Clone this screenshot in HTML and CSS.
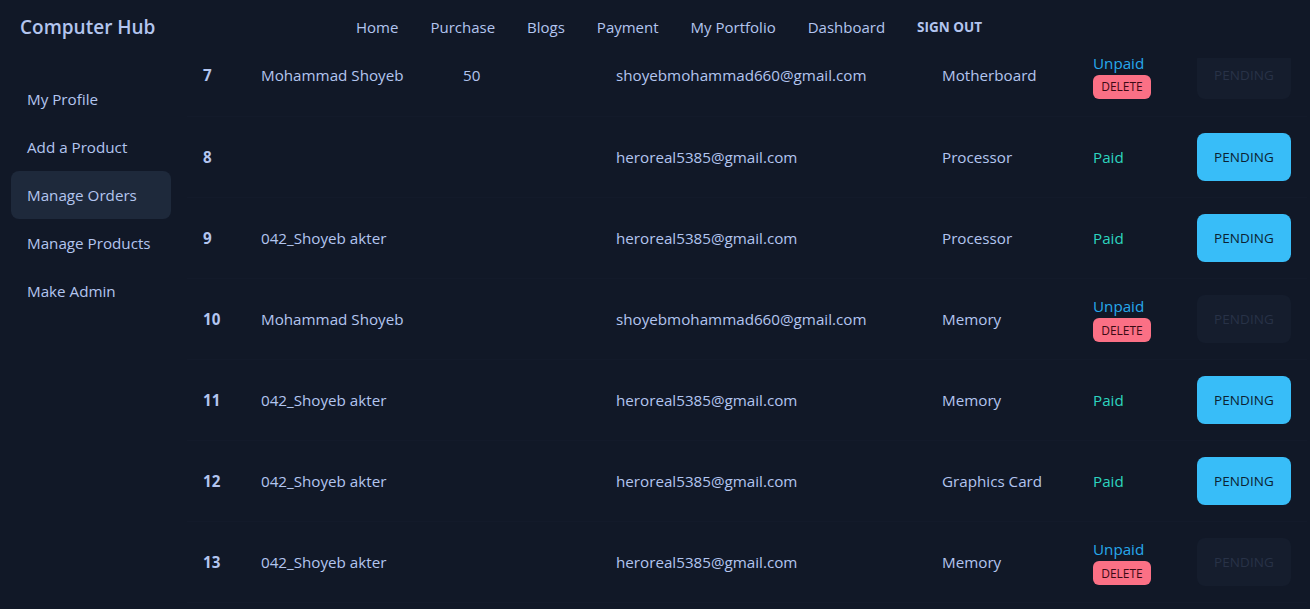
FILE: index.html
```html
<!DOCTYPE html>
<html lang="en">
<head>
<meta charset="utf-8">
<title>Computer Hub</title>
<link rel="stylesheet" href="styles.css">
</head>
<body>
<nav class="navbar">
  <a class="brand">Computer Hub</a>
  <ul class="menu-h">
    <li>Home</li>
    <li>Purchase</li>
    <li>Blogs</li>
    <li>Payment</li>
    <li>My Portfolio</li>
    <li>Dashboard</li>
    <li class="signout">SIGN OUT</li>
  </ul>
</nav>
<div class="layout">
  <aside class="sidebar">
    <ul class="menu-v">
      <li>My Profile</li>
      <li>Add a Product</li>
      <li class="active">Manage Orders</li>
      <li>Manage Products</li>
      <li>Make Admin</li>
    </ul>
  </aside>
  <main class="content">
    <table class="orders">
      <colgroup>
        <col class="c1"><col class="c2"><col class="c3"><col class="c4"><col class="c5"><col class="c6"><col class="c7">
      </colgroup>
      <tbody>
        <tr>
          <th>7</th><td>Mohammad Shoyeb</td><td>50</td><td>shoyebmohammad660@gmail.com</td><td>Motherboard</td>
          <td><div class="unpaid">Unpaid</div><button class="badge-del">DELETE</button></td>
          <td><button class="btn disabled">PENDING</button></td>
        </tr>
        <tr>
          <th>8</th><td></td><td></td><td>heroreal5385@gmail.com</td><td>Processor</td>
          <td><span class="paid">Paid</span></td>
          <td><button class="btn">PENDING</button></td>
        </tr>
        <tr>
          <th>9</th><td>042_Shoyeb akter</td><td></td><td>heroreal5385@gmail.com</td><td>Processor</td>
          <td><span class="paid">Paid</span></td>
          <td><button class="btn">PENDING</button></td>
        </tr>
        <tr>
          <th>10</th><td>Mohammad Shoyeb</td><td></td><td>shoyebmohammad660@gmail.com</td><td>Memory</td>
          <td><div class="unpaid">Unpaid</div><button class="badge-del">DELETE</button></td>
          <td><button class="btn disabled">PENDING</button></td>
        </tr>
        <tr>
          <th>11</th><td>042_Shoyeb akter</td><td></td><td>heroreal5385@gmail.com</td><td>Memory</td>
          <td><span class="paid">Paid</span></td>
          <td><button class="btn">PENDING</button></td>
        </tr>
        <tr>
          <th>12</th><td>042_Shoyeb akter</td><td></td><td>heroreal5385@gmail.com</td><td>Graphics Card</td>
          <td><span class="paid">Paid</span></td>
          <td><button class="btn">PENDING</button></td>
        </tr>
        <tr>
          <th>13</th><td>042_Shoyeb akter</td><td></td><td>heroreal5385@gmail.com</td><td>Memory</td>
          <td><div class="unpaid">Unpaid</div><button class="badge-del">DELETE</button></td>
          <td><button class="btn disabled">PENDING</button></td>
        </tr>
      </tbody>
    </table>
  </main>
</div>
</body>
</html>
```
FILE: styles.css
```css
* { box-sizing: border-box; }
html, body {
  margin: 0;
  padding: 0;
  background: #111827;
  color: #b3c5ef;
  font-family: "Open Sans", "Noto Sans", sans-serif;
  font-size: 15.2px;
  overflow: hidden;
}
ul { list-style: none; margin: 0; padding: 0; }

.navbar {
  position: fixed;
  top: 0; left: 0; right: 0;
  height: 58px;
  padding-bottom: 4px;
  background: #111827;
  display: flex;
  align-items: center;
  z-index: 10;
}
.brand {
  width: 340px;
  padding-left: 20px;
  font-size: 19px;
  font-weight: 600;
  color: #b3c5ef;
}
.menu-h {
  display: flex;
  align-items: center;
  font-size: 15px;
}
.menu-h li {
  padding: 0 16px;
  line-height: 24px;
}
.menu-h .signout {
  font-size: 13.5px;
  font-weight: 700;
}

.layout {
  display: flex;
  padding-top: 35px;
}
.sidebar {
  width: 187px;
  flex: none;
  padding: 40px 16px 0 11px;
}
.menu-v li {
  height: 48px;
  padding: 0 16px;
  display: flex;
  align-items: center;
  border-radius: 8px;
}
.menu-v li.active { background: #1e293b; }

.content { flex: 1; }
.orders {
  border-collapse: collapse;
  table-layout: fixed;
  width: 1120px;
}
.c1 { width: 58px; }
.c2 { width: 202px; }
.c3 { width: 153px; }
.c4 { width: 326px; }
.c5 { width: 151px; }
.c6 { width: 104px; }
.c7 { width: 126px; }
.orders tr { border-bottom: 1px solid #131a2a; height: 81px; }
.orders th, .orders td {
  padding: 16px;
  text-align: left;
  vertical-align: middle;
  white-space: nowrap;
}
.orders th { font-weight: 700; }

.unpaid { color: #27a8ec; line-height: 24px; margin-top: -1px; }
.paid { color: #2dd4bf; }
.badge-del {
  display: block;
  height: 24px;
  width: 58px;
  padding: 0;
  border: 0;
  border-radius: 6px;
  background: #fb7085;
  color: #3b0a14;
  font-family: inherit;
  font-size: 12px;
  font-weight: 500;
}
.btn {
  width: 94px;
  height: 48px;
  border: 0;
  border-radius: 8px;
  background: #38bdf8;
  color: #0b2233;
  font-family: inherit;
  font-size: 13.5px;
  font-weight: 500;
  letter-spacing: 0.1px;
}
.btn.disabled {
  background: #151d2d;
  color: #283247;
}
```
